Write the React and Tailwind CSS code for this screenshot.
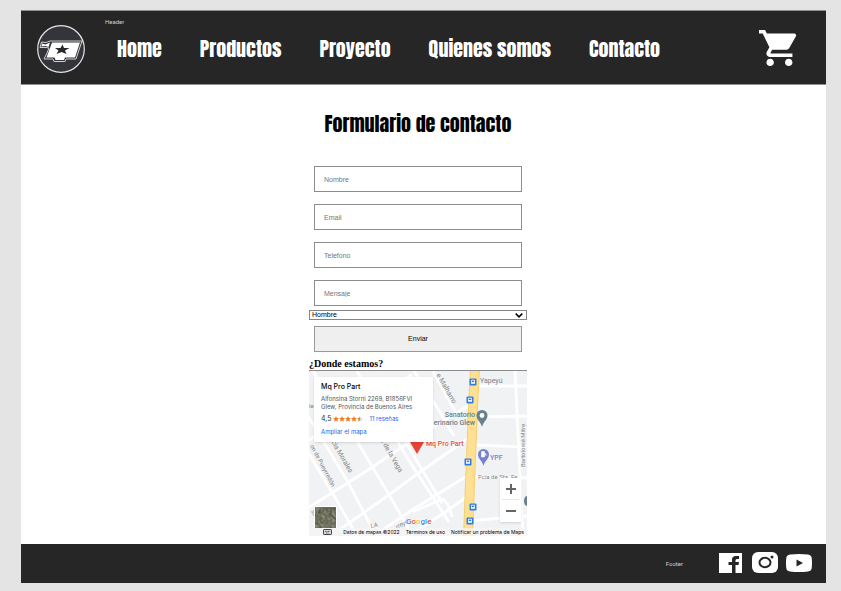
import React from "react";

const navItems = ["Home", "Productos", "Proyecto", "Quienes somos", "Contacto"];
const fields = [
  { id: "nombre", label: "Nombre", type: "text" },
  { id: "email", label: "Email", type: "email" },
  { id: "telefono", label: "Telefono", type: "tel" },
  { id: "mensaje", label: "Mensaje", type: "text" },
];

function Logo() {
  return (
    <svg viewBox="0 0 48 48" className="size-12 shrink-0" role="img" aria-label="Mq Pro Part">
      <circle cx="24" cy="24" r="23.3" fill="#34353a" stroke="#e6e6e6" strokeWidth="1.2" />
      <path d="M13 16H45L39 34H29L28 36.500H17L16 34H7L10 28L12 23L9 22.500L3 22.500L4.500 17L9 17.500Z" fill="#34353a" stroke="#cfcfcf" strokeWidth="1" />
      <path d="M15 17.500H43L38 32.500H28L27 35H18.500L17.500 32.500H9.500Z" fill="#fff" />
      <path d="M5 18.500L8.500 19.500L13 17.500L11.500 22L8.500 21L4.500 21.500Z" fill="#fff" />
      <path d="M25.500 19.500L27 23H32.500L28 25.500L29.500 29L24.500 27L19.500 29L21.500 25.500L18 23H23.500Z" fill="#28292d" />
    </svg>
  );
}

function CartIcon() {
  return (
    <svg viewBox="1 2 21 20" preserveAspectRatio="none" className="h-9 w-[39px]" fill="#fff" aria-hidden="true">
      <path d="M7 18c-1.100 0-1.990.9-1.990 2S5.900 22 7 22s2-.9 2-2-.9-2-2-2zM1 2v2h2l3.600 7.590-1.350 2.450c-.16.280-.25.610-.25.960 0 1.100.9 2 2 2h12v-2H7.420c-.14 0-.25-.11-.25-.25l.03-.12.900-1.630h7.450c.75 0 1.410-.41 1.750-1.030l3.580-6.490A1.003 1.003 0 0 0 20 4H5.210l-.94-2H1zm16 16c-1.100 0-1.990.9-1.990 2s.89 2 1.990 2 2-.9 2-2-.9-2-2-2z" />
    </svg>
  );
}

function BusStop({ x, y }) {
  return (
    <g transform={`translate(${x} ${y})`}>
      <rect x="-3.500" y="-3.500" width="7" height="7" rx="1" fill="#2f7de1" />
      <rect x="-2" y="-2.200" width="4" height="4" rx=".6" fill="#fff" />
      <rect x="-1.300" y="-1.400" width="2.600" height="1.500" fill="#2f7de1" />
    </g>
  );
}

function MapDrawing() {
  return (
    <svg viewBox="0 0 218 165" className="block h-[165px] w-full font-['Roboto',sans-serif]" preserveAspectRatio="xMidYMid slice" role="img" aria-label="Mapa de Glew">
      <defs>
        <filter id="terrain" x="0" y="0" width="1" height="1" colorInterpolationFilters="sRGB">
          <feTurbulence type="fractalNoise" baseFrequency=".3" numOctaves="3" seed="8" />
          <feColorMatrix values=".3 .3 0 0 .14  .3 .3 0 0 .14  .3 .3 0 0 .07  0 0 0 0 1" />
        </filter>
      </defs>
      <rect width="218" height="165" fill="#f1f2f4" />
      <g fill="none" stroke="#fff" strokeWidth="2.800">
        <path d="M4 0L33 45L76 117L104 165" />
        <path d="M48 0L66 33L99 88L140 151" />
        <path d="M-6 37L39 111L67 165" />
        <path d="M-4 76L27 128L48 165" />
        <path d="M105 0L131 41L145 65" />
        <path d="M93 65L133 132" />
        <path d="M124 0L148 44" />
        <path d="M-4 72L48 36L103 4" />
        <path d="M-4 139L56 101L105 68L162 33" />
        <path d="M30 159L70 131L111 101L161 66" />
        <path d="M65 165L103 139L158 105" />
        <path d="M99 165L132 144L159 125" />
        <path d="M104 141L133 128Q139 130 143 146" />
        <path d="M165 15H218M164 46L218 45M164 74L218 76M163 106L218 107M159 150L218 145" />
        <path d="M206 0L214 165" />
      </g>
      <path d="M166 -2L164 37L161 112L159 167" fill="none" stroke="#f4cf72" strokeWidth="10" />
      <path d="M166 -2L164 37L161 112L159 167" fill="none" stroke="#ffdf91" strokeWidth="8" />
      <g fill="#808488" fontSize="7">
        <text transform="translate(127 4) rotate(60)">e Malharro</text>
        <text transform="translate(21 69) rotate(60)">rcia Morales</text>
        <text transform="translate(70 67) rotate(60)">ra de la Vega</text>
        <text transform="translate(1 75) rotate(62)" fontSize="6">on de Pueyrredón</text>
        <text transform="translate(2 140) rotate(66)" fontSize="6">strat</text>
        <text x="0" y="37" fontSize="6">le</text>
        <text x="171" y="12">Yapeyú</text>
        <text x="169" y="108" fontSize="6">Pcia de Sta. Fe</text>
        <text transform="translate(62 157) rotate(-12)" fontSize="6">LA</text>
        <text transform="translate(88 158) rotate(-28)" fontSize="6">rreyes</text>
        <text transform="translate(216 96) rotate(-90)" fontSize="6">Bartolomé Mitre</text>
      </g>
      <g fill="#66818b" fontSize="7" fontWeight="500">
        <text x="166" y="46" textAnchor="end">Sanatorio</text>
        <text x="166" y="54" textAnchor="end">erinario Glew</text>
        <path d="M173 56C172 51 167.500 49 167.500 44.500A5.500 5.500 0 0 1 178.500 44.500C178.500 49 174 51 173 56Z" />
        <circle cx="173" cy="44.500" r="2.400" fill="#fff" />
        <ellipse cx="218" cy="130" rx="3" ry="5" />
      </g>
      <path d="M174.500 95C173.500 90 169 88 169 83.500A5.500 5.500 0 0 1 180 83.500C180 88 175.500 90 174.500 95Z" fill="#7582cb" />
      <path d="M172.500 80.500h3v5.500h-3zM176 82l1 1v2" fill="#fff" stroke="#fff" strokeWidth=".6" />
      <text x="181" y="89" fill="#7582cb" fontSize="7" fontWeight="500">YPF</text>
      <BusStop x={164} y={11} />
      <BusStop x={161} y={29} />
      <BusStop x={159} y={91} />
      <BusStop x={164} y={136} />
      <BusStop x={161} y={150} />
      <path d="M108 83L101 71V64H115V71Z" fill="#ea4335" />
      <text x="117" y="75" fill="#e04a41" fontSize="7" fontWeight="500" stroke="#fff" strokeWidth="1" paintOrder="stroke">Mq Pro Part</text>
      <text x="97" y="153" fontSize="8" fontWeight="500" stroke="#fff" strokeWidth="1" paintOrder="stroke">
        <tspan fill="#4285f4">G</tspan><tspan fill="#ea4335">o</tspan><tspan fill="#fbbc04">o</tspan><tspan fill="#4285f4">g</tspan><tspan fill="#34a853">l</tspan><tspan fill="#ea4335">e</tspan>
      </text>
      <rect x="5" y="135" width="23" height="22" rx="1" fill="#fff" />
      <rect x="6.500" y="136.500" width="20" height="20" filter="url(#terrain)" />
      <rect y="157" width="218" height="8" fill="#f5f5f5" fillOpacity=".7" />
      <rect x="14.500" y="158.500" width="8" height="5" rx=".6" fill="#d8d8d8" stroke="#444" />
      <path d="M16 160.500H21M17 162H20" stroke="#444" strokeWidth=".8" strokeDasharray="1 .5" />
    </svg>
  );
}

function Stars() {
  return (
    <svg viewBox="0 0 50 10" className="h-[6px] w-[30px]" fill="#f07b1c" aria-label="4,5 estrellas">
      {[0, 10, 20, 30].map((x) => (
        <path key={x} transform={`translate(${x} 0)`} d="M5 0L6.500 3.300L10 3.700L7.400 6L8.100 9.500L5 7.700L1.900 9.500L2.600 6L0 3.700L3.500 3.300Z" />
      ))}
      <path transform="translate(40 0)" d="M5 0L6.500 3.300L10 3.700L7.400 6L8.100 9.500L5 7.700Z" fill="#d8d8d8" />
      <path transform="translate(40 0)" d="M5 0V7.700L1.900 9.500L2.600 6L0 3.700L3.500 3.300Z" />
    </svg>
  );
}

function LocationMap() {
  return (
    <div className="relative overflow-hidden border-t border-[#8c8c8c] font-['Inter',sans-serif]">
      <MapDrawing />
      <div className="absolute left-[5px] top-[6px] flex h-[65px] w-[119px] flex-col bg-white px-[7px] pt-[5px] text-[6px] leading-[8px] text-[#555] shadow">
        <strong className="mb-[3px] text-[7px] font-medium leading-[10px] text-black">Mq Pro Part</strong>
        <span className="whitespace-nowrap">Alfonsina Storni 2269, B1856FVI</span>
        <span className="whitespace-nowrap">Glew, Provincia de Buenos Aires</span>
        <div className="mt-1 flex items-center">
          <span className="mr-[2px] text-[7px] text-[#333]">4,5</span>
          <Stars />
          <a href="#resenas" className="ml-[6px] text-[6px] text-[#1a66e8]">11 reseñas</a>
        </div>
        <a href="#mapa" className="mt-[5px] text-[#1a66e8]">Ampliar el mapa</a>
      </div>
      <div className="absolute bottom-[14px] right-[6px] flex w-[21px] flex-col bg-white px-[2px] shadow">
        <button type="button" aria-label="Acercar" className="flex h-[22px] items-center justify-center border-b border-[#e6e6e6]">
          <svg viewBox="0 0 10 10" className="size-[10px]" stroke="#666" strokeWidth="2" aria-hidden="true"><path d="M0 5H10M5 0V10" /></svg>
        </button>
        <button type="button" aria-label="Alejar" className="flex h-[22px] items-center justify-center">
          <svg viewBox="0 0 10 10" className="size-[10px]" stroke="#666" strokeWidth="2" aria-hidden="true"><path d="M0 5H10" /></svg>
        </button>
      </div>
      <div className="absolute bottom-0 right-[3px] flex gap-[6px] whitespace-nowrap text-[5px] leading-[8px] text-black">
        <span>Datos de mapas ©2022</span>
        <a href="#terminos">Términos de uso</a>
        <a href="#problema">Notificar un problema de Maps</a>
      </div>
    </div>
  );
}

function ContactForm() {
  return (
    <form className="mt-[28px] flex flex-col font-['Liberation_Sans',Arial,sans-serif] text-[7px]" onSubmit={(e) => e.preventDefault()}>
      <div className="flex flex-col gap-3 px-[5px]">
        {fields.map((f) => (
          <input
            key={f.id}
            id={f.id}
            type={f.type}
            aria-label={f.label}
            placeholder={f.label}
            className="h-[26px] w-full border border-[#8c8c8c] bg-white px-[9px] placeholder:text-[#757575]"
          />
        ))}
      </div>
      <div className="relative mt-1">
        <select aria-label="Sexo" className="block h-[10px] w-full appearance-none border border-[#858585] bg-white px-[2px] leading-[8px] text-black">
          <option>Hombre</option>
          <option>Mujer</option>
        </select>
        <svg viewBox="0 0 8 5" className="pointer-events-none absolute right-1 top-[3px] h-[5px] w-2" fill="none" stroke="#000" strokeWidth="1.600" aria-hidden="true">
          <path d="M.7.700L4 3.800L7.300.700" />
        </svg>
      </div>
      <button type="submit" className="mx-[5px] mt-[6px] h-[26px] border border-[#9a9a9a] bg-[#efefef] text-black">Enviar</button>
    </form>
  );
}

function SocialLinks() {
  return (
    <div className="flex items-center gap-[10px]">
      <a href="#facebook" aria-label="Facebook">
        <svg viewBox="0 0 23 20" className="h-5 w-[23px]"><path d="M0 0H23V20H0Z" fill="#fff" /><path d="M13 20V12H9.500V9H13V6.500Q13 3 17 3H20V6H18Q16.500 6 16.500 7.500V9H20L19.500 12H16.500V20Z" fill="#262626" /></svg>
      </a>
      <a href="#instagram" aria-label="Instagram">
        <svg viewBox="0 0 26 21" className="h-[21px] w-[26px]"><rect width="26" height="21" rx="6" fill="#fff" /><ellipse cx="13" cy="10.500" rx="5.500" ry="4.700" fill="none" stroke="#262626" strokeWidth="2" /><circle cx="20" cy="5" r="1.500" fill="#262626" /></svg>
      </a>
      <a href="#youtube" aria-label="YouTube" className="-ml-[2px]">
        <svg viewBox="0 0 26 18" className="h-[18px] w-[26px]"><path d="M4 .5Q13-.5 22 .5Q25.500 1 25.700 4Q26.300 9 25.700 14Q25.500 17 22 17.500Q13 18.500 4 17.500Q.5 17 .3 14Q-.3 9 .3 4Q.5 1 4 .5Z" fill="#fff" /><path d="M10.500 5.500L17 9L10.500 12.500Z" fill="#262626" /></svg>
      </a>
    </div>
  );
}

export default function App() {
  return (
    <div className="min-h-screen bg-[#e4e4e4] pb-2 pl-[21px] pr-[15px] pt-[10px]">
      <div className="bg-white">
        <header className="flex items-start border-y border-[#8f8f8f] bg-[#262626] pb-[11px] pl-4 pr-7 pt-1 font-['Roboto',sans-serif] text-white">
          <div className="mt-[10px]"><Logo /></div>
          <div className="ml-5">
            <p className="h-[14px] pt-[3px] text-[6px] leading-[8px] text-[#d0d0d0]">Header</p>
            <nav className="flex gap-[38px] pl-3 pt-[5px] font-['Anton',Impact,sans-serif] text-[20px] leading-[30px]">
              {navItems.map((item) => (
                <a key={item} href="#" className="whitespace-nowrap">{item}</a>
              ))}
            </nav>
          </div>
          <a href="#carrito" aria-label="Carrito" className="ml-auto mt-[15px]"><CartIcon /></a>
        </header>
        <main className="flex flex-col items-center pb-2 pr-[11px] pt-[25px]">
          <h1 className="font-['Anton',Impact,sans-serif] text-[20px] leading-7 text-black">Formulario de contacto</h1>
          <div className="w-[218px]">
            <ContactForm />
            <h2 className="mt-[5px] font-['Liberation_Serif',serif] text-[10px] font-bold leading-[13px] text-black">¿Donde estamos?</h2>
            <LocationMap />
          </div>
        </main>
        <footer className="flex h-[39px] items-center justify-end gap-9 bg-[#262626] pb-[2px] pr-[14px]">
          <span className="pt-[2px] font-['Roboto',sans-serif] text-[6px] text-[#d0d0d0]">Footer</span>
          <SocialLinks />
        </footer>
      </div>
    </div>
  );
}
